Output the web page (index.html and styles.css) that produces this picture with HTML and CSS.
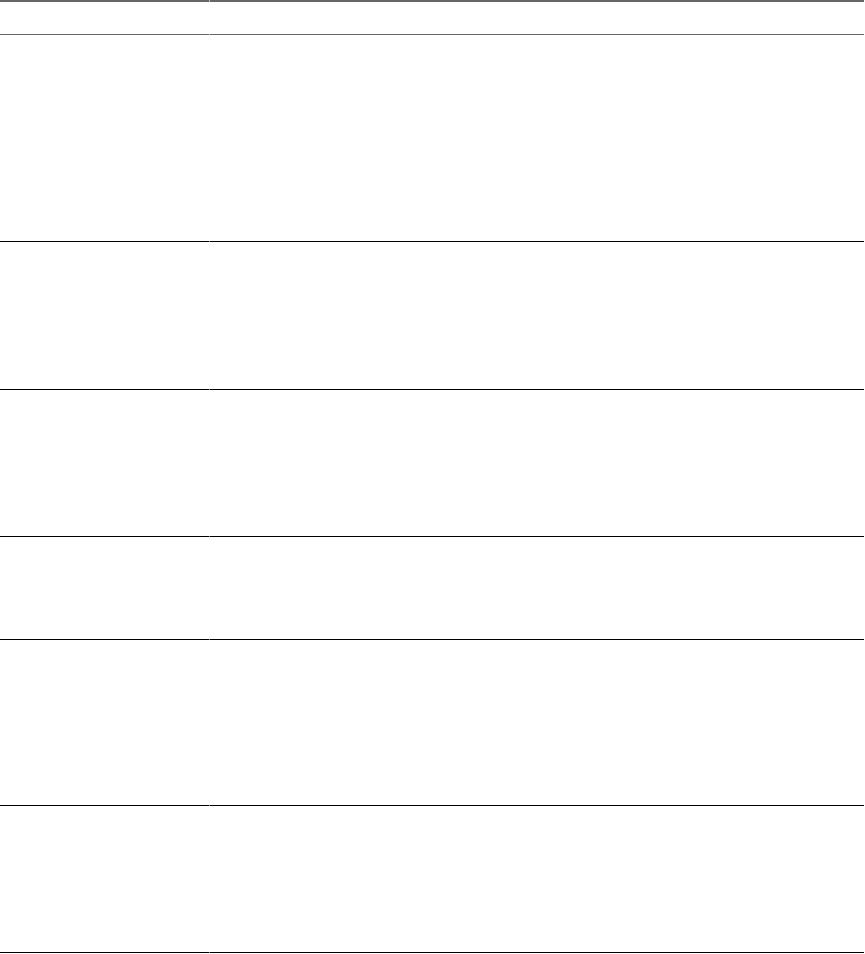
FILE: index.html
```html
<!DOCTYPE html>
<html lang="en">
<head>
<meta charset="utf-8">
<title>Table</title>
<link rel="stylesheet" href="styles.css">
</head>
<body>
<div class="table">
  <div class="row head">
    <div class="cell"></div>
    <div class="cell"></div>
  </div>
  <div class="row r1">
    <div class="cell"></div>
    <div class="cell"></div>
  </div>
  <div class="row r2">
    <div class="cell"></div>
    <div class="cell"></div>
  </div>
  <div class="row r3">
    <div class="cell"></div>
    <div class="cell"></div>
  </div>
  <div class="row r4">
    <div class="cell"></div>
    <div class="cell"></div>
  </div>
  <div class="row r5">
    <div class="cell"></div>
    <div class="cell"></div>
  </div>
  <div class="row r6">
    <div class="cell"></div>
    <div class="cell"></div>
  </div>
</div>
</body>
</html>
```

FILE: styles.css
```css
html, body {
  margin: 0;
  padding: 0;
  background: #fff;
  font-family: "Liberation Sans", Arial, sans-serif;
}

.table {
  width: 864px;
  display: flex;
  flex-direction: column;
}

.row {
  display: grid;
  grid-template-columns: 209px 655px;
  border-bottom: 1px solid #000;
}

.cell {
  position: relative;
}

/* slight seam where the two cell borders meet */
.cell:first-child::after {
  content: "";
  position: absolute;
  right: -1px;
  bottom: -1px;
  width: 1px;
  height: 1px;
  background: #777;
}

.head {
  border-top: 2px solid #666;
  border-bottom: 1px solid #666;
  height: 32px;
}

.head .cell:first-child::after {
  background: #bbb;
}

.head .cell:first-child::before {
  content: "";
  position: absolute;
  right: -1px;
  top: -2px;
  width: 1px;
  height: 2px;
  background: #bbb;
}

.r1 { height: 206px; }
.r2 { height: 147px; }
.r3 { height: 146px; }
.r4 { height: 102px; }
.r5 { height: 165px; }
.r6 { height: 146px; }
```
